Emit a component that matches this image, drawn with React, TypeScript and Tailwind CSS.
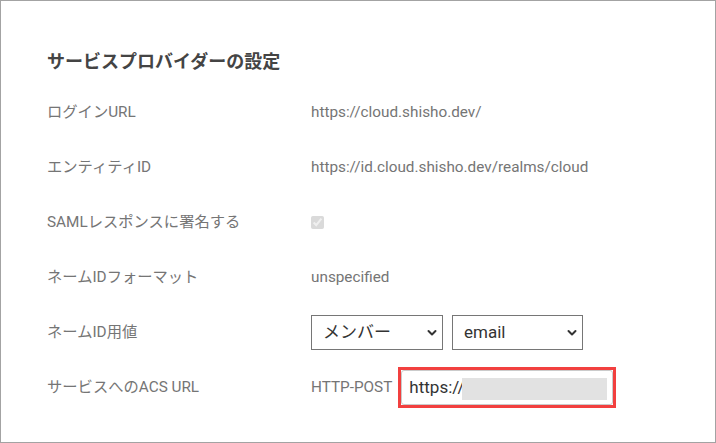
import React from "react";

const rows: { label: string; kind: "text" | "check" | "select" | "acs"; value?: string }[] = [
  { label: "ログインURL", kind: "text", value: "https://cloud.shisho.dev/" },
  { label: "エンティティID", kind: "text", value: "https://id.cloud.shisho.dev/realms/cloud" },
  { label: "SAMLレスポンスに署名する", kind: "check" },
  { label: "ネームIDフォーマット", kind: "text", value: "unspecified" },
  { label: "ネームID用値", kind: "select" },
  { label: "サービスへのACS URL", kind: "acs" },
];

function Chevron() {
  return (
    <svg
      className="pointer-events-none absolute right-[6px] top-1/2 -translate-y-1/2"
      width="10"
      height="7"
      viewBox="0 0 10 7"
      fill="none"
    >
      <path d="M1.5 1.5 L5 5 L8.5 1.5" stroke="#333" strokeWidth="2" strokeLinecap="round" strokeLinejoin="round" />
    </svg>
  );
}

function Select({ value, width }: { value: string; width: string }) {
  return (
    <div className={`relative h-[35px] ${width}`}>
      <select
        defaultValue={value}
        className="h-full w-full appearance-none border border-[#767676] bg-white pl-[11px] text-[17px] text-[#333] outline-none"
      >
        <option>{value}</option>
      </select>
      <Chevron />
    </div>
  );
}

function Value({ row }: { row: (typeof rows)[number] }) {
  if (row.kind === "text") {
    return <span>{row.value}</span>;
  }
  if (row.kind === "check") {
    return <input type="checkbox" checked disabled readOnly className="m-0 h-[13px] w-[13px] opacity-80" />;
  }
  if (row.kind === "select") {
    return (
      <div className="flex gap-[9px]">
        <Select value="メンバー" width="w-[132px]" />
        <Select value="email" width="w-[131px]" />
      </div>
    );
  }
  return (
    <div className="flex items-center gap-[6px]">
      <span>HTTP-POST</span>
      <div className="border-[3px] border-[#f2403f]">
        <div className="relative flex h-[35px] w-[212px] items-center rounded-[3px] border border-[#cbcbcb] bg-white pl-[7px] text-[17px] text-[#333]">
          https://
          {/* redacted part */}
          <div className="absolute left-[60px] top-[7px] h-[22px] w-[145px] bg-[#e2e2e2]" />
        </div>
      </div>
    </div>
  );
}

export default function App() {
  return (
    <div
      className="h-[443px] w-[716px] border border-[#a3a3a3] bg-white pl-[46px] pt-[47px] text-[15.3px] text-[#757575]"
      style={{ fontFamily: 'Roboto, "Noto Sans CJK JP", sans-serif' }}
    >
      <h2 className="mb-[10px] h-[27px] text-[18px] font-bold leading-[27px] text-[#444]">
        サービスプロバイダーの設定
      </h2>
      <div className="grid grid-cols-[264px_1fr] auto-rows-[55px] items-center">
        {rows.map((row) => (
          <React.Fragment key={row.label}>
            <div>{row.label}</div>
            <div className="flex items-center">
              <Value row={row} />
            </div>
          </React.Fragment>
        ))}
      </div>
    </div>
  );
}
